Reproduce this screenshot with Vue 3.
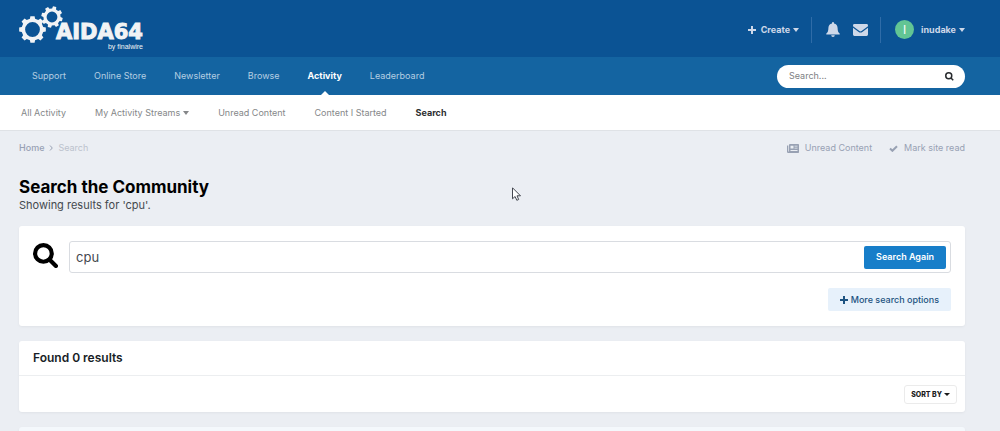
<script setup>
import { ref } from 'vue'

const quickSearch = ref('')
const query = ref('cpu')

const mainLinks = ['Support', 'Online Store', 'Newsletter', 'Browse', 'Activity', 'Leaderboard']
const subLinks = [
  { label: 'All Activity' },
  { label: 'My Activity Streams', menu: true },
  { label: 'Unread Content' },
  { label: 'Content I Started' },
  { label: 'Search', active: true },
]

// Toothed wheel with a round hole, drawn with the even-odd rule.
function gear(cx, cy, outer, root, hole, turn) {
  const teeth = 8
  const step = (Math.PI * 2) / teeth
  const point = (r, a) => `${(cx + r * Math.cos(a)).toFixed(2)} ${(cy + r * Math.sin(a)).toFixed(2)}`
  const points = []
  for (let i = 0; i < teeth; i++) {
    const a = i * step + turn
    points.push(point(root, a - step * 0.3), point(outer, a - step * 0.2))
    points.push(point(outer, a + step * 0.2), point(root, a + step * 0.3))
  }
  return `M${points.join('L')}ZM${cx - hole} ${cy}a${hole} ${hole} 0 1 0 ${hole * 2} 0a${hole} ${hole} 0 1 0 ${-hole * 2} 0Z`
}
const bigGear = gear(13.5, 23.5, 13.5, 11, 7.4, 0)
const smallGear = gear(33, 11, 10.8, 8.6, 5.4, 0.25)
</script>

<template>
  <div class="page">
    <header class="top">
      <a class="logo" href="#" aria-label="AIDA64 by finalwire">
        <svg class="gears" viewBox="0 0 44 38" aria-hidden="true">
          <path :d="bigGear" fill-rule="evenodd" />
          <path :d="smallGear" fill-rule="evenodd" />
        </svg>
        <span class="brand">
          <span class="brand-name">AIDA64</span>
          <span class="brand-by">by finalwire</span>
        </span>
      </a>
      <div class="user-bar">
        <button class="bar-button create" type="button">
          <svg class="plus" viewBox="0 0 8 8" aria-hidden="true"><path d="M3 0h2v3h3v2H5v3H3V5H0V3h3z" /></svg>
          <span>Create</span><i class="caret"></i>
        </button>
        <div class="alerts">
          <button class="bar-button" type="button" aria-label="Notifications">
            <svg class="bell" viewBox="0 0 14 15" aria-hidden="true">
              <path d="M7 0a1 1 0 0 1 1 1v.5c2.300.4 3.600 2.200 3.600 4.500 0 3.200.8 4.600 2.200 5.700.3.300.1.900-.4.900H.6c-.5 0-.7-.6-.4-.900C1.600 10.600 2.400 9.200 2.400 6c0-2.300 1.300-4.100 3.600-4.500V1a1 1 0 0 1 1-1zM5.200 13.200h3.600a1.800 1.800 0 0 1-3.600 0z" />
            </svg>
          </button>
          <button class="bar-button" type="button" aria-label="Messages">
            <svg class="mail" viewBox="0 0 15 12" aria-hidden="true">
              <path d="M1.400 0h12.200A1.400 1.400 0 0 1 15 1.400v.9L8.600 7c-.7.500-1.500.5-2.200 0L0 2.300v-.9A1.400 1.400 0 0 1 1.400 0zM0 3.700l5.700 4.200c1.100.8 2.500.8 3.600 0L15 3.700v6.900a1.400 1.400 0 0 1-1.400 1.400H1.400A1.400 1.400 0 0 1 0 10.600z" />
            </svg>
          </button>
        </div>
        <button class="bar-button account" type="button">
          <span class="avatar">I</span>
          <span>inudake</span><i class="caret"></i>
        </button>
      </div>
    </header>

    <nav class="main-nav" aria-label="Main">
      <ul class="main-links">
        <li v-for="label in mainLinks" :key="label">
          <a href="#" :class="{ active: label === 'Activity' }">{{ label }}</a>
        </li>
      </ul>
      <form class="quick" @submit.prevent>
        <input v-model="quickSearch" type="search" placeholder="Search..." aria-label="Search" />
        <button type="submit" aria-label="Search">
          <svg viewBox="0 0 24 24" aria-hidden="true"><circle cx="10" cy="10" r="8" /><path d="M16 16l6 6" /></svg>
        </button>
      </form>
    </nav>

    <nav class="sub-nav" aria-label="Activity">
      <a v-for="link in subLinks" :key="link.label" href="#" :class="{ active: link.active }">
        {{ link.label }}<i v-if="link.menu" class="caret"></i>
      </a>
    </nav>

    <main class="content">
      <div class="crumbs">
        <nav class="trail" aria-label="Breadcrumb">
          <a href="#">Home</a>
          <svg viewBox="0 0 4 6" aria-hidden="true"><path d="M1 .5L3.300 3 1 5.500" /></svg>
          <span>Search</span>
        </nav>
        <div class="tools">
          <a href="#">
            <svg class="news" viewBox="0 0 12 9" aria-hidden="true">
              <path fill-rule="evenodd" d="M3 0h8.200a.8.800 0 0 1 .8.800v7.400a.8.800 0 0 1-.8.800H1.200A1.200 1.200 0 0 1 0 7.800V1.500h1.300v6h.7V1a1 1 0 0 1 1-1zM3.500 1.700v2.900h3V1.700zM7.500 1.700v.8h3v-.8zM7.500 3.800v.8h3v-.8zM3.500 6v1h7V6z" />
            </svg>
            Unread Content
          </a>
          <a href="#">
            <svg class="check" viewBox="0 0 9 7" aria-hidden="true"><path d="M1 3.500l2.400 2.300L8 1.200" /></svg>
            Mark site read
          </a>
        </div>
      </div>

      <h1>Search the Community</h1>
      <p class="summary">Showing results for 'cpu'.</p>

      <form class="card search-card" @submit.prevent>
        <svg class="lens" viewBox="0 0 24 24" aria-hidden="true"><circle cx="10" cy="10" r="8" /><path d="M16 16l6 6" /></svg>
        <div class="fields">
          <div class="field">
            <input v-model="query" type="text" aria-label="Search term" />
            <button class="primary" type="submit">Search Again</button>
          </div>
          <button class="more" type="button">
            <svg class="plus" viewBox="0 0 8 8" aria-hidden="true"><path d="M3 0h2v3h3v2H5v3H3V5H0V3h3z" /></svg>
            More search options
          </button>
        </div>
      </form>

      <section class="card results">
        <h2>Found 0 results</h2>
        <div class="sort-row">
          <button class="sort" type="button">SORT BY<i class="caret"></i></button>
        </div>
      </section>

      <section class="card list" aria-label="Results"></section>
    </main>

    <svg class="pointer" viewBox="0 0 9 14" aria-hidden="true">
      <path d="M.5.800v11l2.600-2.300 1.700 3.800 1.900-.8L5 8.800h3.500z" />
    </svg>
  </div>
</template>

<style>
body {
  margin: 0;
}
</style>

<style scoped>
.page {
  --left: 19px;
  --right: 35px;
  display: flex;
  flex-direction: column;
  position: relative;
  box-sizing: border-box;
  min-height: 100vh;
  background: #ebeef3;
  color: #353c41;
  font-family: Inter, "Liberation Sans", sans-serif;
  font-size: 9px;
  line-height: 16px;
}
a {
  color: inherit;
  text-decoration: none;
}
button,
input {
  box-sizing: border-box;
  margin: 0;
  padding: 0;
  border: 0;
  background: none;
  color: inherit;
  font: inherit;
}
svg {
  display: block;
  flex: none;
}
.caret {
  display: inline-block;
  margin-left: 3px;
  border: solid transparent;
  border-width: 4px 3px 0;
  border-top-color: currentColor;
  vertical-align: 1px;
}
.top {
  display: flex;
  align-items: center;
  justify-content: space-between;
  height: 57px;
  padding: 0 var(--right) 0 var(--left);
  background: #0b5394;
}
.logo {
  display: flex;
  align-items: flex-start;
  align-self: flex-start;
  padding-top: 6px;
  color: #f1f3f5;
}
.gears {
  width: 44px;
  height: 38px;
  fill: currentColor;
}
.brand {
  display: flex;
  flex-direction: column;
  align-items: flex-end;
  margin: 14px 0 0 -7px;
}
.brand-name {
  font-family: "DejaVu Sans", sans-serif;
  font-size: 21px;
  font-weight: 700;
  line-height: 25px;
  -webkit-text-stroke: 1px currentColor;
}
.brand-by {
  font-family: "Liberation Sans", sans-serif;
  font-size: 7px;
  line-height: 4px;
}
.user-bar {
  display: flex;
  align-items: center;
  padding-top: 2px;
  color: #ced8e9;
  font-weight: 700;
}
.bar-button {
  display: flex;
  align-items: center;
}
.create .plus {
  margin-right: 5px;
}
.plus {
  width: 8px;
  height: 8px;
  fill: currentColor;
}
.alerts {
  display: flex;
  gap: 13px;
  height: 26px;
  margin: 0 14px 0 12px;
  padding: 0 12px 0 14px;
  border: solid #2f6ca8;
  border-width: 0 1px;
}
.bell {
  width: 14px;
  height: 15px;
  fill: currentColor;
}
.mail {
  width: 15px;
  height: 12px;
  fill: currentColor;
}
.avatar {
  width: 19px;
  margin-right: 7px;
  border-radius: 50%;
  background: #62c594;
  color: #fff;
  font-size: 12px;
  font-weight: 400;
  line-height: 19px;
  text-align: center;
}
.main-nav {
  display: flex;
  align-items: center;
  justify-content: space-between;
  height: 38px;
  padding: 0 var(--right) 0 18px;
  background: #1464a1;
  color: #b4cee1;
}
.main-links {
  display: flex;
  align-self: stretch;
  margin: 0;
  padding: 0;
  list-style: none;
}
.main-links a {
  display: block;
  position: relative;
  height: 38px;
  padding: 0 14px;
  line-height: 38px;
}
.main-links .active {
  color: #fff;
  font-weight: 700;
}
.main-links .active::after {
  content: "";
  position: absolute;
  bottom: 0;
  left: 50%;
  margin-left: -4px;
  border: 4px solid transparent;
  border-bottom-color: #fff;
  border-top: 0;
}
.quick {
  display: flex;
  align-items: center;
  width: 188px;
  height: 23px;
  border-radius: 12px;
  background: #fff;
}
.quick input {
  flex: 1;
  min-width: 0;
  padding-left: 12px;
  outline: 0;
  color: #353c41;
}
.quick input::placeholder {
  color: #7d8083;
  opacity: 1;
}
.quick button {
  padding: 0 11px;
}
.quick svg {
  width: 9px;
  height: 9px;
  fill: none;
  stroke: #272a2d;
  stroke-width: 4;
}
.sub-nav {
  display: flex;
  gap: 29px;
  height: 36px;
  padding: 0 21px;
  border-bottom: 1px solid #dfe2e6;
  box-sizing: border-box;
  background: #fff;
  color: #858789;
  line-height: 36px;
}
.sub-nav .active {
  color: #2c2e30;
  font-weight: 700;
}
.content {
  display: flex;
  flex: 1;
  flex-direction: column;
  padding: 9px var(--right) 0 var(--left);
}
.crumbs,
.trail,
.tools,
.tools a {
  display: flex;
  align-items: center;
}
.crumbs {
  justify-content: space-between;
  color: #98a1b3;
}
.trail {
  gap: 5px;
}
.trail a {
  font-weight: 500;
}
.trail span {
  color: #bcc2cd;
}
.trail svg {
  width: 4px;
  height: 6px;
  fill: none;
  stroke: currentColor;
}
.tools {
  gap: 17px;
}
.tools a {
  gap: 6px;
}
.news {
  width: 12px;
  height: 9px;
  fill: currentColor;
}
.check {
  width: 9px;
  height: 7px;
  fill: none;
  stroke: currentColor;
  stroke-width: 2;
}
h1 {
  margin: 21px 0 0;
  color: #000;
  font-size: 17px;
  font-weight: 700;
  line-height: 20px;
}
.summary {
  margin: 0 0 13px;
  color: #44494e;
  font-size: 11px;
  line-height: 16px;
}
.card {
  border-radius: 3px;
  background: #fff;
  box-shadow: 0 1px 3px #0000000d;
}
.search-card {
  display: flex;
  gap: 11px;
  margin-bottom: 15px;
  padding: 15px 14px;
}
.lens {
  width: 25px;
  height: 25px;
  margin-top: 2px;
  fill: none;
  stroke: #000;
  stroke-width: 4;
  stroke-linecap: round;
}
.fields {
  display: flex;
  flex: 1;
  flex-direction: column;
  align-items: flex-end;
  gap: 15px;
}
.field {
  display: flex;
  align-items: center;
  align-self: stretch;
  box-sizing: border-box;
  height: 32px;
  padding: 0 4px 0 6px;
  border: 1px solid #d9dce1;
  border-radius: 3px;
}
.field input {
  flex: 1;
  min-width: 0;
  outline: 0;
  color: #44494e;
  font-size: 13px;
}
.primary {
  height: 23px;
  padding: 0 12px;
  border-radius: 2px;
  background: #177ec9;
  color: #fff;
  font-weight: 600;
}
.more {
  display: flex;
  align-items: center;
  gap: 3px;
  height: 23px;
  padding: 0 12px;
  border-radius: 2px;
  background: #e7f1fb;
  color: #1d5381;
  font-weight: 500;
}
.results {
  margin-bottom: 15px;
}
h2 {
  margin: 0;
  padding: 0 14px;
  border-bottom: 1px solid #eceef0;
  color: #171d26;
  font-size: 12px;
  font-weight: 600;
  line-height: 34px;
}
.sort-row {
  display: flex;
  justify-content: flex-end;
  padding: 9px 8px 8px;
}
.sort {
  height: 19px;
  padding: 0 6px;
  border: 1px solid #ebebeb;
  border-radius: 3px;
  color: #1b1b1b;
  font-size: 7px;
  font-weight: 800;
}
.sort .caret {
  margin-left: 2px;
  border-width: 3px 3px 0;
}
.list {
  flex: 1;
  min-height: 4px;
  border-radius: 3px 3px 0 0;
  background: #f4f8fc;
}
.pointer {
  position: absolute;
  top: 187px;
  left: 512px;
  width: 9px;
  height: 14px;
  fill: #fff;
  stroke: #444850;
}
</style>
